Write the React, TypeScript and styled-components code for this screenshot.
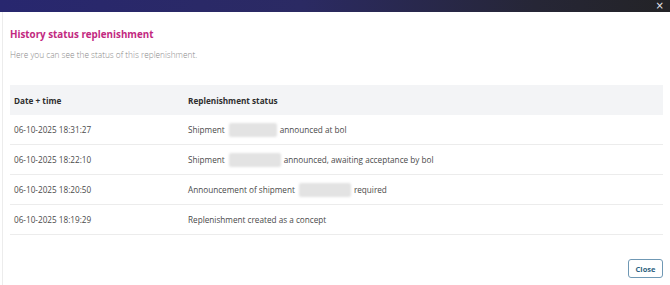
import * as React from "react"
import styled, { createGlobalStyle } from "styled-components"

const GlobalStyle = createGlobalStyle`
  body {
    margin: 0;
    background: #ffffff;
    font-family: "Open Sans", "Liberation Sans", sans-serif;
  }
`

/**
 * Styled Components
 */

const Dialog = styled.div`
  width: 670px;
  height: 285px;
  display: flex;
  flex-direction: column;
  overflow: hidden;
  background: #fff;
`

const TopBar = styled.div`
  height: 12px;
  flex: 0 0 12px;
  background: linear-gradient(90deg, #28276f 0%, #2b2a63 45%, #262636 80%, #232326 100%);
  display: flex;
  justify-content: flex-end;
  align-items: center;
  padding-right: 6px;
  overflow: hidden;
`

const CloseX = styled.span`
  color: #e8e8ee;
  font-size: 10px;
  line-height: 10px;
  font-family: "DejaVu Sans", sans-serif;
`

const Body = styled.div`
  flex: 1;
  display: flex;
  flex-direction: column;
  border-left: 1px solid #ececec;
  margin-left: 2px;
  padding: 0 7px;
`

const Title = styled.h2`
  margin: 16px 0 0;
  font-family: "Open Sans", sans-serif;
  font-weight: 700;
  font-size: 9.8px;
  line-height: 14px;
  color: #c2297f;
`

const Subtitle = styled.p`
  margin: 8px 0 0;
  font-size: 8.3px;
  line-height: 10px;
  color: #8a8a8a;
  font-weight: 300;
`

const Table = styled.div`
  margin-top: 25px;
  width: 653px;
  display: flex;
  flex-direction: column;
`

const Row = styled.div<{ $head?: boolean }>`
  display: grid;
  grid-template-columns: 174px 1fr;
  height: 30px;
  align-items: center;
  background: ${(p) => (p.$head ? "#f3f4f6" : "transparent")};
  border-bottom: ${(p) => (p.$head ? "none" : "1px solid #ececec")};
  box-sizing: border-box;
  font-size: 8.2px;
  color: ${(p) => (p.$head ? "#2e2e2e" : "#4a4a4a")};
  font-weight: ${(p) => (p.$head ? 700 : 400)};
`

const Cell = styled.div`
  padding-left: 4px;
  display: flex;
  align-items: center;
  white-space: nowrap;
`

const Redacted = styled.span<{ $w: number }>`
  display: inline-block;
  width: ${(p) => p.$w}px;
  height: 14px;
  margin: 0 3px 0 4px;
  background: #e3e3e3;
  border-radius: 2px;
  filter: blur(1.2px);
`

const Footer = styled.div`
  margin-top: 24px;
  width: 653px;
  display: flex;
  justify-content: flex-end;
`

const CloseButton = styled.button`
  width: 35px;
  height: 19px;
  padding: 0;
  border: 1.5px solid #6f98b4;
  border-radius: 3px;
  background: #fff;
  color: #2f5f80;
  font-family: "Open Sans", sans-serif;
  font-weight: 700;
  font-size: 7.5px;
`

const rows = [
  {
    time: "06-10-2025 18:31:27",
    before: "Shipment",
    w: 48,
    after: "announced at bol",
  },
  {
    time: "06-10-2025 18:22:10",
    before: "Shipment",
    w: 52,
    after: "announced, awaiting acceptance by bol",
  },
  {
    time: "06-10-2025 18:20:50",
    before: "Announcement of shipment",
    w: 52,
    after: "required",
  },
  {
    time: "06-10-2025 18:19:29",
    before: "Replenishment created as a concept",
    w: 0,
    after: "",
  },
]

export default function App() {
  return (
    <>
      <GlobalStyle />
      <Dialog>
        <TopBar>
          <CloseX>×</CloseX>
        </TopBar>
        <Body>
          <Title>History status replenishment</Title>
          <Subtitle>Here you can see the status of this replenishment.</Subtitle>
          <Table>
            <Row $head>
              <Cell>Date + time</Cell>
              <Cell>Replenishment status</Cell>
            </Row>
            {rows.map((r) => (
              <Row key={r.time}>
                <Cell>{r.time}</Cell>
                <Cell>
                  {r.before}
                  {r.w > 0 && <Redacted $w={r.w} />}
                  {r.after}
                </Cell>
              </Row>
            ))}
          </Table>
          <Footer>
            <CloseButton>Close</CloseButton>
          </Footer>
        </Body>
      </Dialog>
    </>
  )
}
